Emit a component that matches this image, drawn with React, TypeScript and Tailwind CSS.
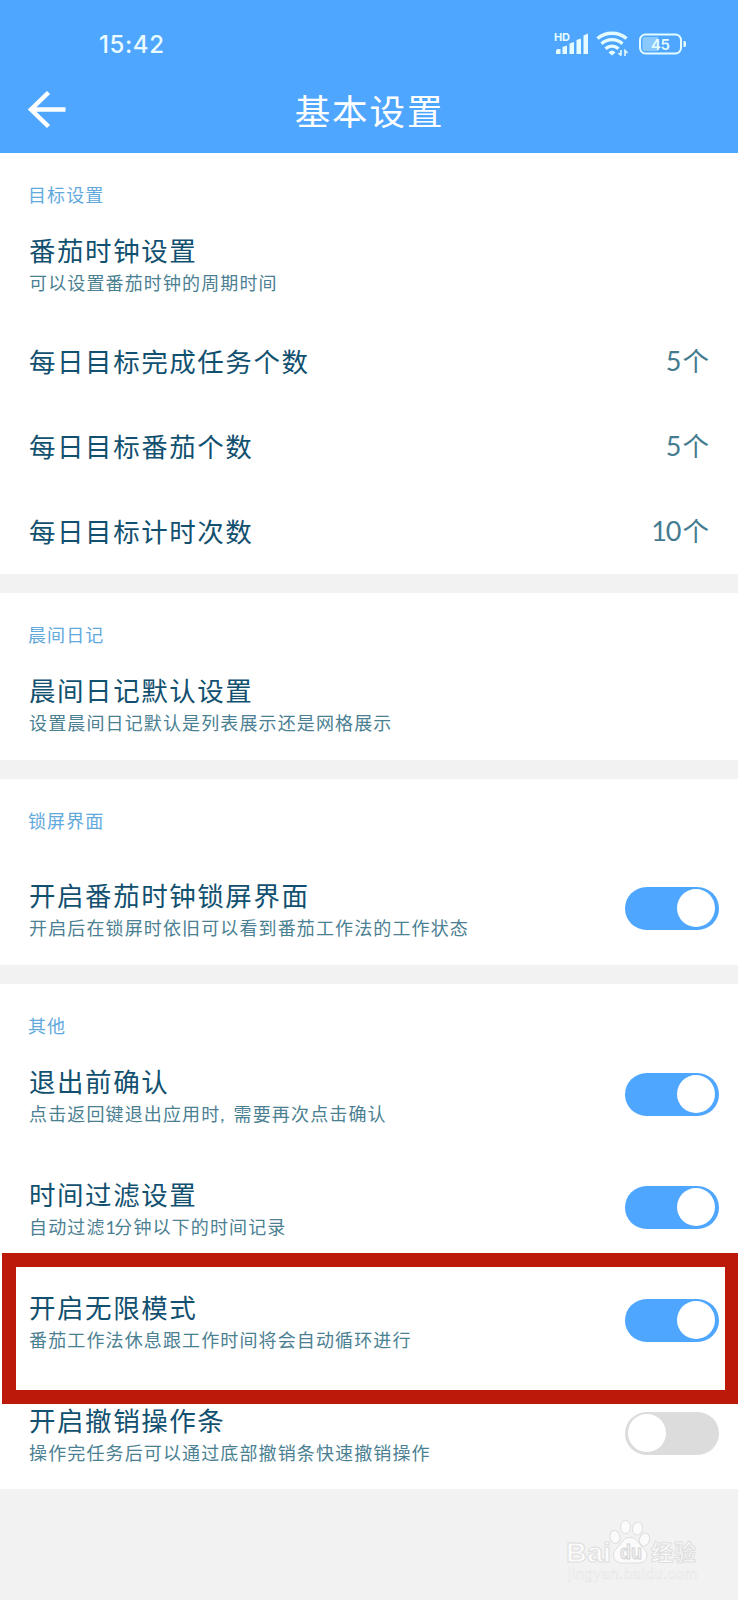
import React, { useState } from 'react';

interface SwitchProps {
  checked: boolean;
  onChange: (checked: boolean) => void;
}

function Switch({ checked, onChange }: SwitchProps) {
  return (
    <button
      role="switch"
      aria-checked={checked}
      onClick={() => onChange(!checked)}
      className={`flex items-center w-[94px] h-[43px] mt-px pl-[3px] pr-[4px] pb-[1px] rounded-full shrink-0 ${
        checked ? 'justify-end bg-[#4fa6fe]' : 'justify-start bg-[#dcdcdc]'
      }`}
    >
      <span className="w-[38px] h-[38px] rounded-full bg-white" />
    </button>
  );
}

interface RowProps {
  title: string;
  desc: React.ReactNode;
  defaultOn?: boolean;
  highlighted?: boolean;
}

function Row({ title, desc, defaultOn, highlighted }: RowProps) {
  const [on, setOn] = useState(!!defaultOn);

  return (
    <div className="relative flex items-center justify-between h-[113px] pl-[29px] pr-[19px]">
      <div className="pt-[5px] whitespace-nowrap">
        <h2 className="mb-[2px] text-[26.5px] leading-[34px] tracking-[1.55px] text-[#12506f]">{title}</h2>
        <p className="text-[18px] leading-[29px] tracking-[1.13px] text-[#4b7f92] font-['Lato','Noto_Sans_CJK_SC',sans-serif]">
          {desc}
        </p>
      </div>
      {defaultOn !== undefined && <Switch checked={on} onChange={setOn} />}
      {highlighted && (
        <div className="absolute z-10 left-[2px] -right-[1px] -top-[10px] h-[151px] border-[14px] border-[#bc190b] pointer-events-none" />
      )}
    </div>
  );
}

function GoalRow({ title, count }: { title: string; count: number }) {
  return (
    <div className="flex items-center justify-between h-[85px] pb-px pl-[29px] pr-[29px]">
      <h2 className="text-[26.5px] leading-[34px] tracking-[1.55px] text-[#12506f]">{title}</h2>
      <span className="text-[26.5px] leading-[34px] text-[#457b8f] font-['Lato','Noto_Sans_CJK_SC',sans-serif]">
        <span className="text-[27px] mr-[2px] tracking-[-1px]">{count}</span>个
      </span>
    </div>
  );
}

function Section({ label, children }: { label: string; children: React.ReactNode }) {
  return (
    <section className="bg-white">
      <div className="h-[53px] pt-[28px] pl-[28px] text-[18px] leading-[26px] tracking-[1.1px] text-[#62a9dc]">
        {label}
      </div>
      {children}
    </section>
  );
}

function StatusIcons() {
  return (
    <svg width="136" height="28" viewBox="0 0 136 28" className="text-[#e4fbff]" fill="currentColor">
      <text x="0" y="11" fontSize="11" fontWeight="700" fontFamily="Inter, sans-serif" textLength="16">HD</text>
      <path d="M2 24v-3q0-2 2-2h2.500v5zM8.500 24v-7l4.500-1.500v8.500zM15.500 24v-10.500l4.500-1.500v12zM22.500 24v-14l4.500-1.500v15.500zM29.500 24v-18.500l4.500-2v20.500z" />
      <g fill="none" stroke="currentColor" strokeWidth="3.400">
        <path d="M43.500 8.500c8-7 21-7 29 0" />
        <path d="M47.500 13.700c6-5.500 15-5.500 21 0" />
        <path d="M51.500 18.700c4-3.500 9-3.500 13 0" />
      </g>
      <path d="M54.500 22.500q3.500-4 7 0l-3.500 3z" />
      <path d="M67 20v5.500M64.500 23l2.500 2.500M71 26v-5.500l2.500 2.500" fill="none" stroke="currentColor" strokeWidth="1.600" />
      <rect x="86" y="4.500" width="41" height="19" rx="5.500" fill="none" stroke="currentColor" strokeWidth="2" />
      <path d="M91 7h13v14h-13q-2.500 0-2.500-2.500v-9q0-2.500 2.500-2.500z" fill="#8ac9ff" />
      <path d="M129.500 11h1q1.500 0 1.500 1.500v3q0 1.500-1.500 1.500h-1z" />
      <text x="97" y="19.500" fontSize="15" fontWeight="600" fontFamily="Inter, sans-serif" textLength="19">45</text>
    </svg>
  );
}

function Watermark() {
  return (
    <svg width="140" height="72" viewBox="0 0 140 72" className="absolute left-[562px] bottom-[16px]">
      <g fill="#fbfbfb" stroke="#dedede" strokeWidth="1">
        <ellipse cx="53" cy="25" rx="5" ry="6.500" transform="rotate(-15 53 25)" />
        <ellipse cx="63.500" cy="15" rx="5" ry="6.500" />
        <ellipse cx="75.500" cy="16.500" rx="5" ry="6.500" transform="rotate(10 75.500 16.500)" />
        <ellipse cx="82.500" cy="27.500" rx="5" ry="6.500" transform="rotate(15 82.500 27.500)" />
        <path d="M68 25.500c5 0 7 3 10 7s7 6 7 11c0 6-5 7.500-9 7.500h-16c-5 0-8.500-3-8.500-8 0-5 4-7 7-11s5-6.500 9.500-6.500z" />
        <g fontFamily="Liberation Sans, Noto Sans CJK SC, sans-serif" fontWeight="700">
          <text x="4" y="49.500" fontSize="28" textLength="45" lengthAdjust="spacingAndGlyphs">Bai</text>
          <text x="58" y="47" fontSize="20" fill="#f2f2f2" stroke="#d4d4d4" textLength="22" lengthAdjust="spacingAndGlyphs">du</text>
          <text x="89" y="48" fontSize="22" textLength="45">经验</text>
        </g>
      </g>
      <text x="6" y="67" fontSize="14.500" fill="#fbfbfb" stroke="#e6e6e6" strokeWidth="0.600" fontFamily="Liberation Sans, sans-serif" textLength="129">
        jingyan.baidu.com
      </text>
    </svg>
  );
}

export default function App() {
  return (
    <div className="relative flex flex-col w-[738px] h-[1600px] overflow-hidden bg-[#f2f2f2] font-['Noto_Sans_CJK_SC',sans-serif]">
      <header className="h-[153px] shrink-0 bg-[#4fa6fe] text-white">
        <div className="flex items-center justify-between h-[88px] pl-[99px] pr-[48px]">
          <span className="pt-[2px] text-[24px] leading-none font-medium tracking-[0.6px] text-[#eafcff] font-['Inter',sans-serif]">
            15:42
          </span>
          <StatusIcons />
        </div>
        <div className="grid grid-cols-[100px_1fr_100px] items-center h-[44px]">
          <button className="pl-[27px] pb-[2px]" aria-label="返回">
            <svg width="40" height="40" viewBox="0 0 40 40" fill="none" stroke="currentColor" strokeWidth="4.500">
              <path d="M38.500 20.500H4M21.500 3.500L4 20.500 21.500 37.500" />
            </svg>
          </button>
          <h1 className="pl-px text-center text-[35.500px] leading-[44px] tracking-[1.9px]">基本设置</h1>
        </div>
      </header>

      <main className="flex flex-col gap-[19px]">
        <Section label="目标设置">
          <Row title="番茄时钟设置" desc="可以设置番茄时钟的周期时间" />
          <GoalRow title="每日目标完成任务个数" count={5} />
          <GoalRow title="每日目标番茄个数" count={5} />
          <GoalRow title="每日目标计时次数" count={10} />
        </Section>

        <Section label="晨间日记">
          <div className="pb-px">
            <Row title="晨间日记默认设置" desc="设置晨间日记默认是列表展示还是网格展示" />
          </div>
        </Section>

        <Section label="锁屏界面">
          <div className="pt-[19px] pb-px">
            <Row title="开启番茄时钟锁屏界面" desc="开启后在锁屏时依旧可以看到番茄工作法的工作状态" defaultOn />
          </div>
        </Section>

        <Section label="其他">
          <Row
            title="退出前确认"
            desc={<>点击返回键退出应用时<span className="tracking-[2.3px]">, </span>需要再次点击确认</>}
            defaultOn
          />
          <Row
            title="时间过滤设置"
            desc={<>自动过滤<span className="tracking-[-1.7px]">1</span>分钟以下的时间记录</>}
            defaultOn
          />
          <Row title="开启无限模式" desc="番茄工作法休息跟工作时间将会自动循环进行" defaultOn highlighted />
          <Row title="开启撤销操作条" desc="操作完任务后可以通过底部撤销条快速撤销操作" defaultOn={false} />
        </Section>
      </main>

      <Watermark />
    </div>
  );
}
